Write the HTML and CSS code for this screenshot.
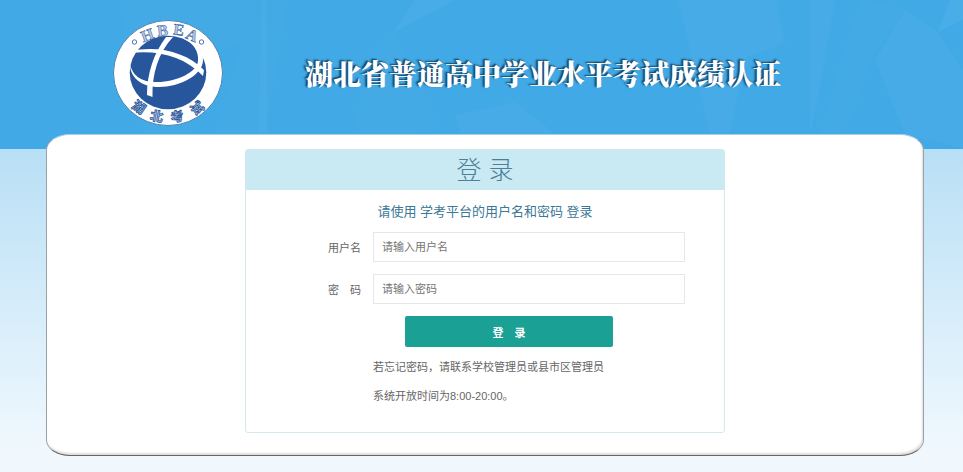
FILE: index.html
```html
<!DOCTYPE html>
<html lang="zh-CN">
<head>
    <meta charset="UTF-8">
    <meta name="viewport" content="width=device-width, initial-scale=1.0">
    <title>湖北省普通高中学业水平考试成绩认证</title>
    <link rel="stylesheet" href="styles.css">
</head>
<body>
    <header class="header">
        <svg class="header-bg" viewBox="0 0 963 149" preserveAspectRatio="none" aria-hidden="true">
            <g fill="#fff">
                <path opacity=".02" d="M128 0H230L243 43 205 52 190 149H150L120 60z"/>
                <path opacity=".02" d="M230 0H287L262 149H210L243 43z"/>
                <path opacity=".03" d="M262 0H266L268 149H258z"/>
                <path opacity=".04" d="M415 0H455L393 33z"/>
                <path opacity=".02" d="M393 33L440 128 350 149 370 60z"/>
                <path opacity=".03" d="M455 115L515 102 555 134H460z"/>
                <path opacity=".03" d="M678 0H776L785 43 745 58 730 134H710z"/>
                <path opacity=".03" d="M810 0H835L818 100 810 134z"/>
                <path opacity=".02" d="M860 0L905 10 870 60 845 134H820z"/>
                <path opacity=".03" d="M905 10L937 32 963 70V149L905 134 875 60z"/>
                <path opacity=".05" d="M950 0H963V20L938 32z"/>
            </g>
        </svg>
        <svg class="logo" viewBox="0 0 110 106" role="img" aria-label="湖北考试 HBEA">
            <ellipse cx="55" cy="53" rx="54.5" ry="52.5" fill="#fff" stroke="#4f83b5"/>
            <ellipse cx="55" cy="52.5" rx="38.3" ry="36.8" fill="#27569c"/>
            <g fill="#fff">
                <path d="M53 17C41 33 34 53 34 75L39.5 77C39 54 45 33 60 17z"/>
                <path d="M18 31C44 25 74 32 91 50L90 56C72 37 46 30 18 33z"/>
                <path d="M17 44C20 58 31 62 44 62C64 62 84 52 85 41C86 31 80 23 71 19C83 22 91 31 90 41C89 55 67 67 46 67C29 67 17 58 17 44z"/>
            </g>
            <path d="M69 17C80 22 88 30 92 41" fill="none" stroke="#fff"/>
            <g class="logo-latin">
                <text transform="translate(36 20) rotate(-20)">H</text>
                <text transform="translate(50 16) rotate(-6)">B</text>
                <text transform="translate(65 15) rotate(8)">E</text>
                <text transform="translate(77 20) rotate(24)">A</text>
            </g>
            <g class="logo-cjk">
                <text transform="translate(23 91) rotate(35)">湖</text>
                <text transform="translate(43 101) rotate(10)">北</text>
                <text transform="translate(65 101) rotate(-10)">考</text>
                <text transform="translate(87 92) rotate(-37)">试</text>
            </g>
            <g fill="none" stroke="#27569c" stroke-width=".8">
                <circle cx="21.5" cy="22" r="2.2"/>
                <circle cx="88.5" cy="22" r="2.2"/>
            </g>
        </svg>
        <h1 class="title">湖北省普通高中学业水平考试成绩认证</h1>
    </header>

    <main class="card">
        <section class="panel">
            <h2 class="panel-title">登 录</h2>
            <p class="tip">请使用 学考平台的用户名和密码 登录</p>
            <form class="login-form">
                <div class="row">
                    <label for="username">用户名</label>
                    <input type="text" id="username" placeholder="请输入用户名">
                </div>
                <div class="row">
                    <label for="password">密&emsp;码</label>
                    <input type="password" id="password" placeholder="请输入密码">
                </div>
                <button type="submit" class="btn">登&emsp;录</button>
                <div class="notes">
                    <p>若忘记密码，请联系学校管理员或县市区管理员</p>
                    <p>系统开放时间为8:00-20:00。</p>
                </div>
            </form>
        </section>
    </main>
</body>
</html>
```

FILE: styles.css
```css
* {
    box-sizing: border-box;
}

body {
    margin: 0;
    min-height: 100vh;
    padding-bottom: 16px;
    background: linear-gradient(#b8dff5 149px, #f0f8fe 95%);
    font-family: "Liberation Sans", "Noto Sans CJK SC", sans-serif;
    font-size: 11px;
    color: #666;
}

h1, h2, p {
    margin: 0;
    font-weight: normal;
}

.header {
    position: relative;
    display: flex;
    align-items: center;
    gap: 82px;
    height: 149px;
    padding: 0 40px 4px 113px;
    background-color: #40a9e6;
}

.header-bg {
    position: absolute;
    top: 0;
    left: 0;
    width: 100%;
    height: 100%;
}

.logo {
    position: relative;
    flex: none;
    width: 110px;
    height: 106px;
}

.logo text {
    fill: #b9cbe2;
    stroke: #27569c;
    text-anchor: middle;
}

.logo-latin {
    font-family: "Liberation Serif", serif;
    font-size: 16px;
    font-weight: bold;
    stroke-width: 0.5px;
}

.logo-cjk {
    font-family: "Noto Sans CJK SC", sans-serif;
    font-size: 13px;
    font-weight: bold;
    stroke-width: 0.8px;
}

.title {
    position: relative;
    font-family: "Noto Serif CJK SC", "Noto Sans CJK SC", serif;
    font-size: 28px;
    font-weight: 900;
    line-height: 40px;
    color: #fff;
    text-shadow: -1px -1px 1px #1b4a68, -2px -1px 2px #1b4a68;
}

.card {
    position: relative;
    margin: -15px 39px 0 46px;
    padding: 14px 20px 22px;
    background-color: #fff;
    border: 1px solid #9aa2a8;
    border-top-color: #a9cfe6;
    border-bottom-color: #666;
    border-radius: 24px / 16px;
    box-shadow: inset -1px -2px 2px #ddd;
}

.panel {
    max-width: 480px;
    margin: 0 auto;
    border: 1px solid #d3e9ee;
    border-radius: 3px;
}

.panel-title {
    height: 40px;
    line-height: 40px;
    background-color: #c9eaf2;
    color: #4b809b;
    font-size: 25px;
    font-weight: 300;
    text-align: center;
}

.tip {
    padding: 12px 0 10px;
    line-height: 20px;
    font-size: 13px;
    color: #3b7796;
    text-align: center;
}

.login-form {
    padding: 0 39px 21px 79px;
}

.row {
    display: flex;
    align-items: center;
    gap: 12px;
    margin-bottom: 12px;
}

.row label {
    width: 36px;
    text-align: right;
    white-space: nowrap;
}

.row input {
    flex: 1;
    min-width: 0;
    height: 30px;
    padding: 0 8px;
    border: 1px solid #e6e6e6;
    background-color: #fff;
    color: #666;
    font: inherit;
}

.row input::placeholder {
    color: #757575;
}

.btn {
    display: block;
    width: 208px;
    height: 31px;
    margin-left: 80px;
    background-color: #1aa094;
    border: none;
    border-radius: 2px;
    color: #fff;
    font: inherit;
    font-weight: bold;
    cursor: pointer;
}

.notes {
    padding: 6px 0 0 48px;
    line-height: 29px;
}
```
